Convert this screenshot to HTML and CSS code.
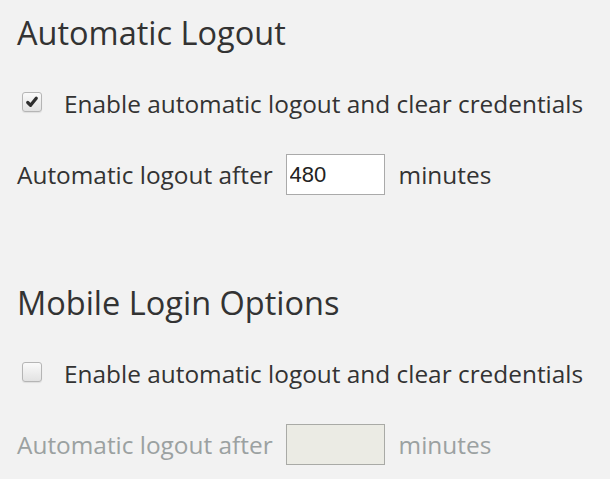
FILE: index.html
```html
<!DOCTYPE html>
<html>
<head>
<meta charset="utf-8">
<link rel="stylesheet" href="styles.css">
</head>
<body>
<section class="group">
  <h2 class="title">Automatic Logout</h2>
  <label class="check-row">
    <span class="box">
      <svg width="19" height="19" viewBox="0 0 19 19"><path d="M5 9.5 L8 12.5 L14 5" fill="none" stroke="#2e2e2e" stroke-width="3.4" stroke-linecap="round" stroke-linejoin="round"/></svg>
    </span>
    <span class="label">Enable automatic logout and clear credentials</span>
  </label>
  <div class="field-row">
    <span class="label">Automatic logout after</span>
    <input class="num" type="text" value="480">
    <span class="label">minutes</span>
  </div>
</section>
<section class="group">
  <h2 class="title">Mobile Login Options</h2>
  <label class="check-row">
    <span class="box"></span>
    <span class="label">Enable automatic logout and clear credentials</span>
  </label>
  <div class="field-row disabled">
    <span class="label">Automatic logout after</span>
    <input class="num" type="text" value="" disabled>
    <span class="label">minutes</span>
  </div>
</section>
</body>
</html>
```

FILE: styles.css
```css
html, body {
  margin: 0;
  background: #f2f2f2;
}
body {
  padding: 13px 0 0 17px;
  font-family: "Open Sans", "DejaVu Sans", sans-serif;
  color: #333;
}
.group {
  margin-bottom: 88px;
}
.group:last-child {
  margin-bottom: 0;
}
.title {
  margin: 0;
  font-size: 32.5px;
  line-height: 40px;
  font-weight: 400;
  color: #333;
}
.check-row {
  display: flex;
  align-items: flex-start;
  margin-top: 36px;
  height: 30px;
  font-size: 24.4px;
  line-height: 30px;
}
.box {
  box-sizing: border-box;
  width: 20px;
  height: 20px;
  margin: 3px 22px 0 5px;
  border: 1px solid #b5b5b5;
  border-radius: 3px;
  background: linear-gradient(#fafafa, #e2e2e2);
  box-shadow: 0 1px 1px rgba(0,0,0,0.08);
  display: flex;
  align-items: center;
  justify-content: center;
}
.box svg {
  display: block;
}
.field-row {
  display: flex;
  align-items: center;
  margin-top: 35px;
  height: 41px;
  font-size: 24.4px;
  line-height: 30px;
  gap: 13px;
}
.num {
  box-sizing: border-box;
  width: 99px;
  height: 41px;
  margin: 0 1px 0 0;
  padding: 0 3px;
  border: 1px solid #aaa;
  background: #fff;
  font-family: "Liberation Sans", Arial, sans-serif;
  font-size: 22px;
  color: #222;
  outline: none;
}
.disabled .label {
  color: #9ba1a1;
}
.disabled .num {
  background: #ebebe4;
  border-color: #a9aaa6;
}
```
